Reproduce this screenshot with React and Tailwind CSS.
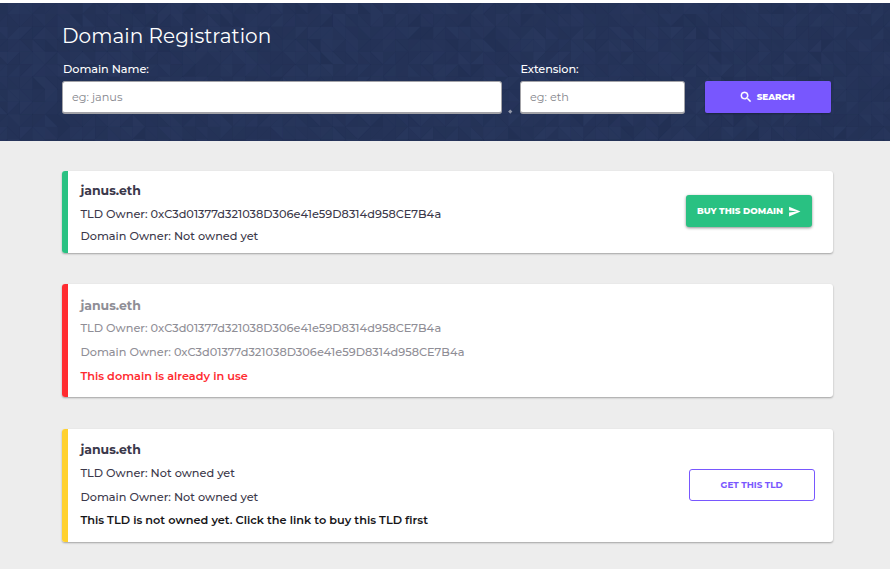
import React from "react";

const CELL = 12.52;
const COLS = 72;
const ROWS = 12;

function noise(x, y, seed) {
  let n = (x * 374761393 + y * 668265263 + seed * 1442695041) | 0;
  n = Math.imul(n ^ (n >>> 13), 1274126177);
  return ((n ^ (n >>> 16)) >>> 0) / 4294967296;
}

// Faint mosaic of right triangles behind the search form.
function TrianglePattern() {
  const shapes = [];
  for (let r = 0; r < ROWS; r++) {
    for (let c = 0; c < COLS; c++) {
      const x = c * CELL - 5.1;
      const y = r * CELL - 1.4;
      const a = [x, y];
      const b = [x + CELL, y];
      const d = [x + CELL, y + CELL];
      const e = [x, y + CELL];
      const halves = noise(c, r, 1) > 0.5 ? [[a, b, d], [a, d, e]] : [[a, b, e], [b, d, e]];
      halves.forEach((pts, i) => {
        const v = noise(c, r, 2 + i);
        shapes.push(
          <polygon
            key={`${r}-${c}-${i}`}
            points={pts.map((p) => p.join(",")).join(" ")}
            fill={v > 0.4 ? "#2f3f68" : "#1f2d4f"}
            opacity={v > 0.4 ? (v - 0.4) * 0.5 : v < 0.05 ? 0.4 : (0.4 - v) * 0.4}
          />
        );
      });
    }
  }
  return (
    <svg className="absolute inset-0 h-full w-full" viewBox="0 0 890 138" preserveAspectRatio="none" aria-hidden="true">
      {shapes}
    </svg>
  );
}

function SearchIcon() {
  return (
    <svg className="size-[14px]" viewBox="0 0 24 24" fill="currentColor" stroke="currentColor" strokeWidth="0.6">
      <path d="M15.5 14h-.79l-.28-.27A6.47 6.47 0 0 0 16 9.5 6.5 6.5 0 1 0 9.5 16c1.61 0 3.09-.59 4.23-1.57l.27.28v.79l5 4.99L20.49 19l-4.99-5zm-6 0C7.01 14 5 11.99 5 9.5S7.01 5 9.5 5 14 7.01 14 9.5 11.99 14 9.5 14z" />
    </svg>
  );
}

function SendIcon() {
  return (
    <svg className="size-[13px]" viewBox="0 0 24 24" fill="currentColor">
      <path d="M2.01 21L23 12 2.01 3 2 10l15 2-15 2z" />
    </svg>
  );
}

function Card({ bar, size, tone, title, rows, note, action }) {
  return (
    <section className={`flex w-[771.5px] overflow-hidden rounded-[3px] bg-white shadow-[0_1px_2px_rgba(0,0,0,0.32)] ${size}`}>
      <div className={`w-[6px] shrink-0 ${bar}`} />
      <div className={`flex flex-1 flex-col pl-[12.7px] ${tone}`}>
        <h2 className={`h-[20px] text-[12.5px] leading-[20px] font-bold ${title}`}>janus.eth</h2>
        {rows}
        {note}
      </div>
      {action}
    </section>
  );
}

export default function App() {
  return (
    <div className="h-[569px] w-[890px] overflow-hidden bg-[#ededed] pt-[3px] font-[Montserrat,Inter,sans-serif] shadow-[inset_0_3px_0_#fff]">
      <header className="relative h-[138px] overflow-hidden bg-[#253358] text-white">
        <TrianglePattern />
        <div className="relative pl-[62px]">
          <h1 className="pt-[19px] text-[20px] leading-[28px] tracking-[0.05px]">Domain Registration</h1>
          <div className="mt-[11px] flex items-end">
            <div>
              <label className="block h-[20px] pl-px text-[11.3px] leading-[16px] font-medium tracking-[-0.05px]">Domain Name:</label>
              <input placeholder="eg: janus" className="block h-[33px] w-[440px] rounded-[3px] border-[1.5px] border-b-2 border-[#a3a3a8] bg-white px-[9px] text-[11.3px] placeholder:text-[#85868c]" />
            </div>
            <span className="mb-[2px] ml-[7px] size-[2.5px] rotate-45 bg-[#9399aa]" />
            <div className="ml-[8.5px]">
              <label className="block h-[20px] pl-[0.5px] text-[11.3px] leading-[16px] font-medium tracking-[-0.1px]">Extension:</label>
              <input placeholder="eg: eth" className="block h-[33px] w-[165px] rounded-[3px] border-[1.5px] border-b-2 border-[#a3a3a8] bg-white px-[9px] text-[11.3px] placeholder:text-[#85868c]" />
            </div>
            <button className="mb-px ml-[20px] flex h-[32px] w-[125.5px] items-center justify-center gap-[4px] rounded-[2px] bg-[#7857fe] pr-[2px] text-[8.8px] font-extrabold tracking-[-0.1px] shadow-[0_1px_2px_rgba(0,0,0,0.3)]">
              <SearchIcon />
              SEARCH
            </button>
          </div>
        </div>
      </header>

      <main className="flex flex-col pt-[30px] pl-[61.7px]">
        <Card
          bar="bg-[#29c182]"
          size="h-[82px]"
          tone="text-[#3b384a]"
          title="mt-[10px]"
          rows={
            <>
              <p className="mt-[4px] h-[18px] text-[11.3px] leading-[18px] font-medium">TLD Owner: 0xC3d01377d321038D306e41e59D8314d958CE7B4a</p>
              <p className="mt-[4px] h-[18px] text-[11.3px] leading-[18px] font-medium">Domain Owner: Not owned yet</p>
            </>
          }
          action={
            <button className="mt-[24px] mr-[21.7px] flex h-[32px] w-[126px] items-center justify-center gap-[5px] rounded-[3px] bg-[#29c182] pl-px text-[8.8px] font-extrabold text-white shadow-[0_1px_3px_rgba(0,0,0,0.45)]">
              BUY THIS DOMAIN
              <SendIcon />
            </button>
          }
        />
        <Card
          bar="bg-[#ff2b30]"
          size="mt-[31px] h-[113px]"
          tone="text-[#8f8e96]"
          title="mt-[12px]"
          rows={
            <>
              <p className="mt-[3px] h-[18px] text-[11.3px] leading-[18px] font-medium">TLD Owner: 0xC3d01377d321038D306e41e59D8314d958CE7B4a</p>
              <p className="mt-[6px] h-[18px] text-[11.3px] leading-[18px] font-medium">Domain Owner: 0xC3d01377d321038D306e41e59D8314d958CE7B4a</p>
            </>
          }
          note={<p className="mt-[6px] h-[18px] text-[11.3px] leading-[18px] font-semibold text-[#ff2b30]">This domain is already in use</p>}
        />
        <Card
          bar="bg-[#ffd12e]"
          size="mt-[31.5px] h-[113px]"
          tone="text-[#3b384a]"
          title="mt-[11.5px]"
          rows={
            <>
              <p className="mt-[4px] h-[18px] text-[11.3px] leading-[18px] font-medium">TLD Owner: Not owned yet</p>
              <p className="mt-[6px] h-[18px] text-[11.3px] leading-[18px] font-medium">Domain Owner: Not owned yet</p>
            </>
          }
          note={<p className="mt-[5px] h-[18px] text-[11.3px] leading-[18px] font-semibold text-[#161518]">This TLD is not owned yet. Click the link to buy this TLD first</p>}
          action={
            <button className="mt-[40.5px] mr-[18.5px] flex h-[32px] w-[126px] items-center justify-center rounded-[3px] border border-[#7857fe] text-[8.8px] font-bold text-[#7857fe]">
              GET THIS TLD
            </button>
          }
        />
      </main>
    </div>
  );
}
